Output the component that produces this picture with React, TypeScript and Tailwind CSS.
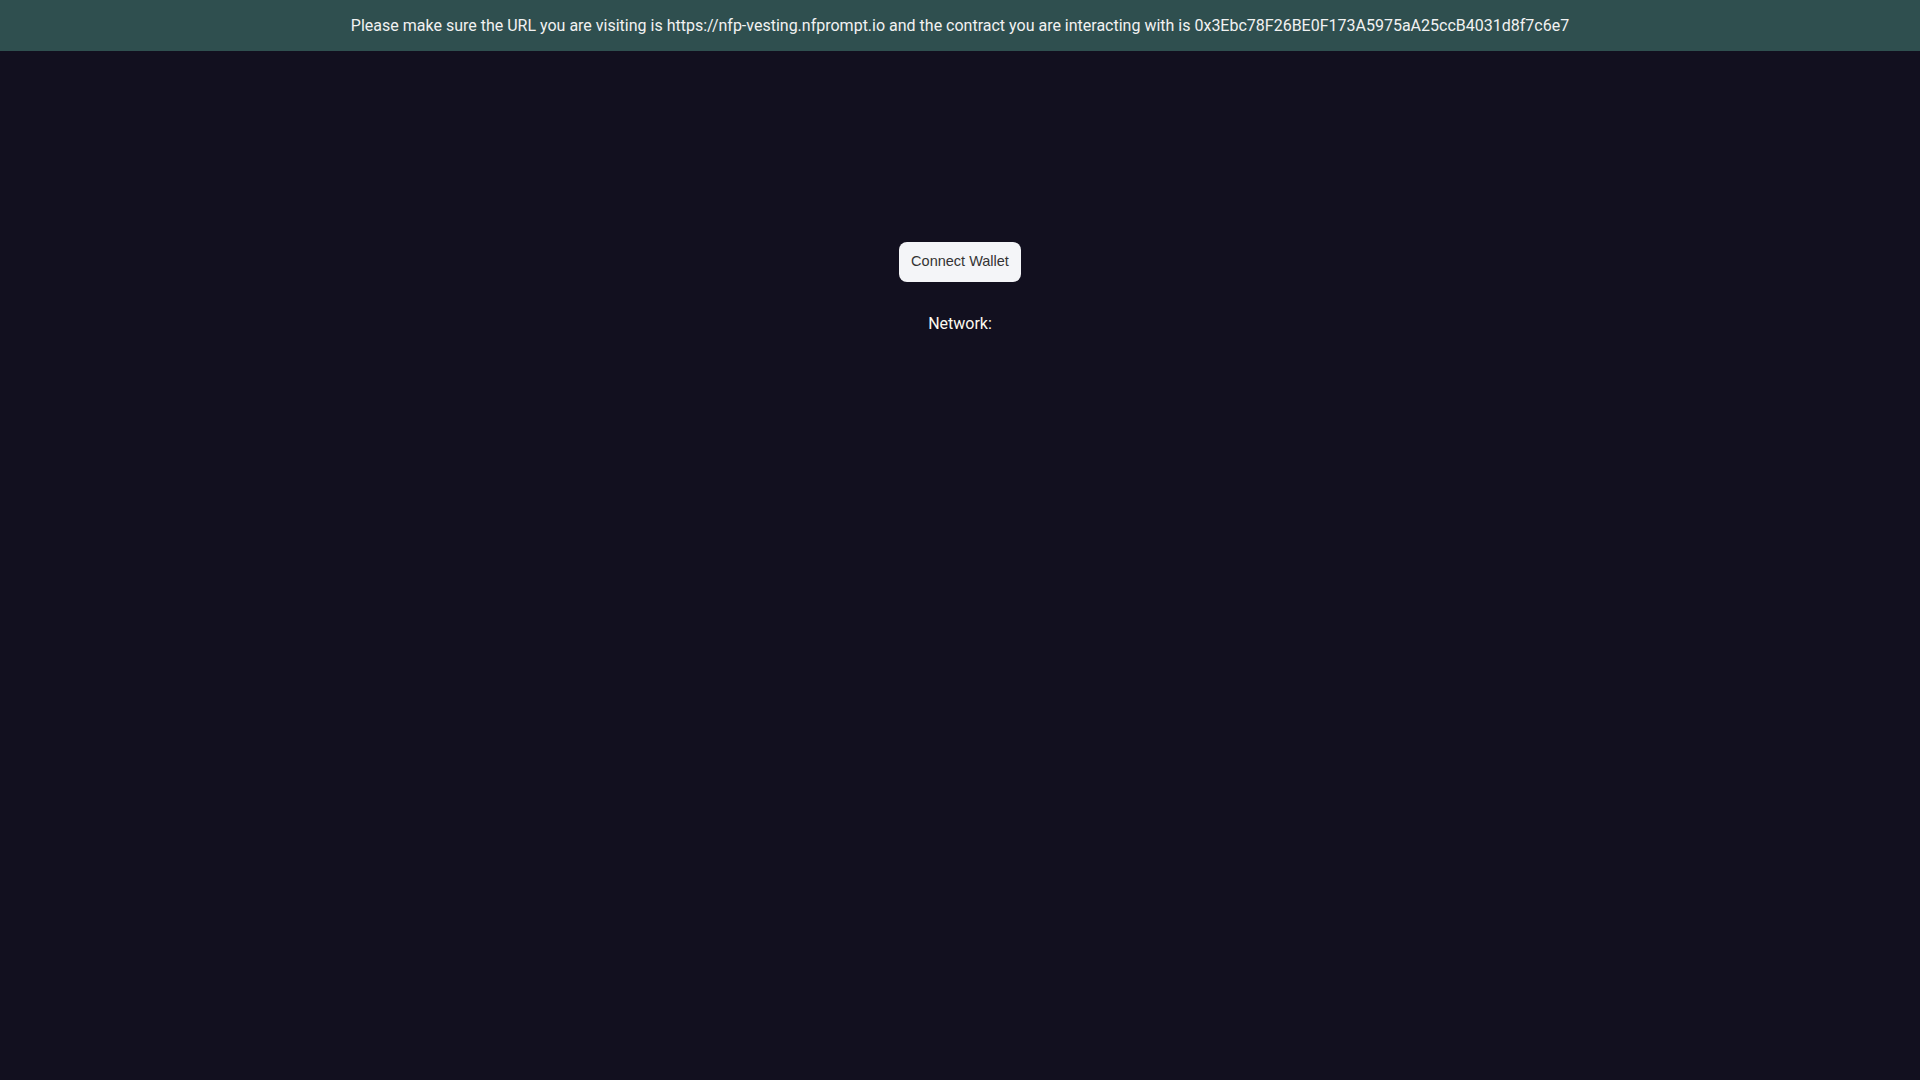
export default function App() {
  return (
    <div className="min-h-screen bg-[#12101f] font-['Roboto',sans-serif]">
      <div className="h-[51px] bg-[#2f4f4f] flex items-center justify-center text-[16px] text-[#f2f2f2]">
        Please make sure the URL you are visiting is https://nfp-vesting.nfprompt.io and the contract you are interacting with is 0x3Ebc78F26BE0F173A5975aA25ccB4031d8f7c6e7
      </div>
      <div className="flex flex-col items-center pt-[191px]">
        <button className="h-[40px] w-[122px] rounded-[8px] bg-[#f4f5f8] text-[14.5px] text-[#333333] font-['Liberation_Sans',Arial,sans-serif]">
          Connect Wallet
        </button>
        <p className="mt-[32px] text-[16px] leading-[20px] text-[#fdfaf0]">Network: </p>
      </div>
    </div>
  )
}
